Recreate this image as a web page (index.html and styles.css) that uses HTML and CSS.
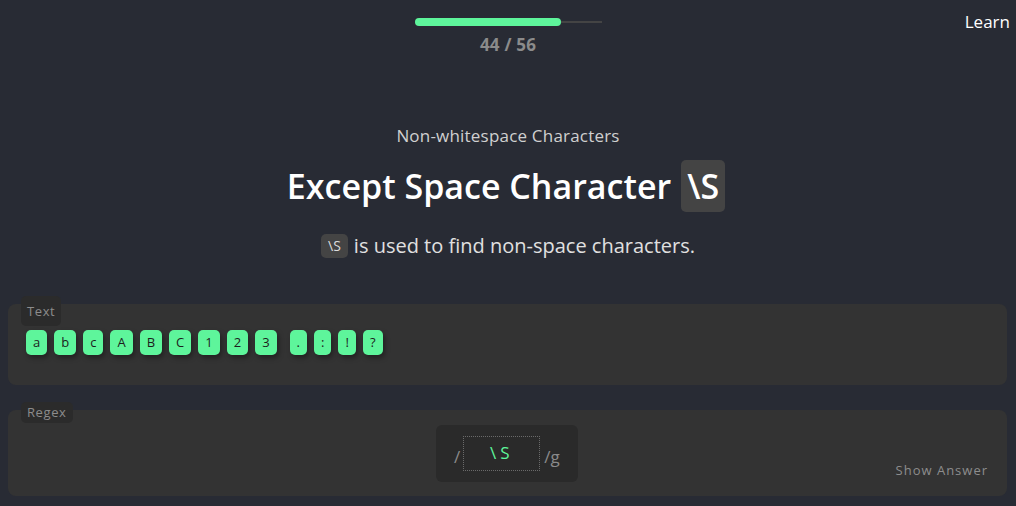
FILE: index.html
```html
<!DOCTYPE html>
<html lang="en">
<head>
<meta charset="utf-8">
<title>Except Space Character \S</title>
<link rel="stylesheet" href="styles.css">
</head>
<body>
<div class="page">
  <header class="top">
    <div class="spacer"></div>
    <div class="progress">
      <div class="track"><div class="fill" style="width: 78.6%"></div></div>
      <div class="count">44 / 56</div>
    </div>
    <div class="nav"><a class="learn" href="#">Learn</a></div>
  </header>

  <section class="intro">
    <div class="subtitle">Non-whitespace Characters</div>
    <h1 class="title">Except Space Character <span class="code-big">\S</span></h1>
    <p class="desc"><span class="code-small">\S</span> is used to find non-space characters.</p>
  </section>

  <section class="panel panel-text">
    <span class="panel-label label-text">Text</span>
    <div class="chips">
      <span class="chip">a</span>
      <span class="chip">b</span>
      <span class="chip">c</span>
      <span class="chip">A</span>
      <span class="chip">B</span>
      <span class="chip">C</span>
      <span class="chip">1</span>
      <span class="chip">2</span>
      <span class="chip">3</span>
      <span class="space"></span>
      <span class="chip">.</span>
      <span class="chip">:</span>
      <span class="chip">!</span>
      <span class="chip">?</span>
    </div>
  </section>

  <section class="panel panel-regex">
    <span class="panel-label label-regex">Regex</span>
    <div class="regex-side"></div>
    <div class="regex-box">
      <span class="slash">/</span>
      <div class="regex-input">\S</div>
      <span class="slash flags">/g</span>
    </div>
    <div class="regex-side right">
      <span class="show-answer">Show Answer</span>
    </div>
  </section>
</div>
</body>
</html>
```

FILE: styles.css
```css
* { box-sizing: border-box; }

html, body {
  margin: 0;
  padding: 0;
  background: #282b34;
  font-family: "Open Sans", "Noto Sans", sans-serif;
  color: #fff;
}

.page {
  width: 1016px;
  height: 506px;
  overflow: hidden;
}

.top {
  display: grid;
  grid-template-columns: 1fr auto 1fr;
  padding-top: 18px;
}

.progress {
  display: flex;
  flex-direction: column;
  align-items: center;
  width: 187px;
}

.track {
  width: 187px;
  height: 8px;
  display: flex;
  align-items: center;
  background: linear-gradient(#444 0 0) center / 100% 2px no-repeat;
}

.fill {
  height: 8px;
  background: #5ef59b;
  border-radius: 4px;
}

.count {
  margin-top: 8px;
  font-size: 17px;
  font-weight: 700;
  color: #8b8b8b;
  line-height: 22px;
  letter-spacing: 0.2px;
}

.nav {
  display: flex;
  justify-content: flex-end;
  padding-right: 6px;
  margin-top: -7px;
}

.learn {
  color: #fff;
  text-decoration: none;
  font-size: 17px;
  line-height: 22px;
}

.intro {
  display: flex;
  flex-direction: column;
  align-items: center;
  margin-top: 68px;
}

.subtitle {
  font-size: 17px;
  color: #d0d0d0;
  line-height: 24px;
  letter-spacing: 0.2px;
}

.title {
  margin: 12px 0 0;
  font-size: 34px;
  font-weight: 600;
  line-height: 52px;
  display: flex;
  align-items: center;
  gap: 10px;
  padding-right: 4px;
}

.code-big {
  display: inline-block;
  background: #444;
  border-radius: 5px;
  padding: 0 6px;
  height: 52px;
  line-height: 52px;
}

.desc {
  margin: 21px 0 0;
  font-size: 20px;
  color: #e0e0e0;
  line-height: 25px;
  display: flex;
  align-items: center;
  gap: 6px;
}

.code-small {
  display: inline-block;
  background: #444;
  border-radius: 5px;
  font-size: 14px;
  height: 24px;
  line-height: 24px;
  padding: 0 7px;
  color: #ddd;
}

.panel {
  position: relative;
  background: #333;
  border-radius: 8px;
  margin: 0 9px 0 8px;
}

.panel-label {
  position: absolute;
  left: 13px;
  background: #2b2b2b;
  color: #8c8c8c;
  font-size: 13px;
  border-radius: 5px;
  letter-spacing: 0.6px;
  padding: 0 6px;
}

.panel-text {
  margin-top: 46px;
  height: 81px;
  padding: 26px 18px 0;
}

.label-text {
  top: -8px;
  height: 30px;
  line-height: 16px;
  padding-top: 7px;
}

.chips {
  display: flex;
  gap: 7px;
}

.chip {
  display: inline-block;
  background: #5ef59b;
  color: #1d1d1d;
  font-size: 13px;
  height: 25px;
  line-height: 25px;
  padding: 0 7px;
  border-radius: 5px;
  min-width: 17px;
  text-align: center;
  box-shadow: 2px 3px 5px rgba(0, 0, 0, 0.35);
}

.space { width: 0; margin-left: -1px; }

.panel-regex {
  margin-top: 25px;
  height: 86px;
  display: grid;
  grid-template-columns: 1fr auto 1fr;
  padding: 15px 19px 0;
}

.label-regex {
  top: -8px;
  height: 21px;
  line-height: 21px;
}

.regex-box {
  background: #2a2a2a;
  border-radius: 6px;
  height: 57px;
  width: 142px;
  display: flex;
  align-items: center;
  padding: 0 0 0 18px;
  gap: 3px;
  margin-left: -1px;
}

.slash {
  color: #8a8a8a;
  font-size: 17px;
  padding-top: 6px;
}

.regex-input {
  width: 77px;
  height: 35px;
  border: 1px dotted #6a6a6a;
  color: #5ef59b;
  font-size: 17px;
  letter-spacing: 4px;
  text-align: center;
  line-height: 31px;
  padding-left: 0;
}

.flags { margin-left: 1px; }

.regex-side.right {
  display: flex;
  justify-content: flex-end;
  align-items: flex-end;
  padding-bottom: 17px;
}

.show-answer {
  color: #8d8d8d;
  font-size: 13px;
  letter-spacing: 1px;
  line-height: 18px;
}
```
